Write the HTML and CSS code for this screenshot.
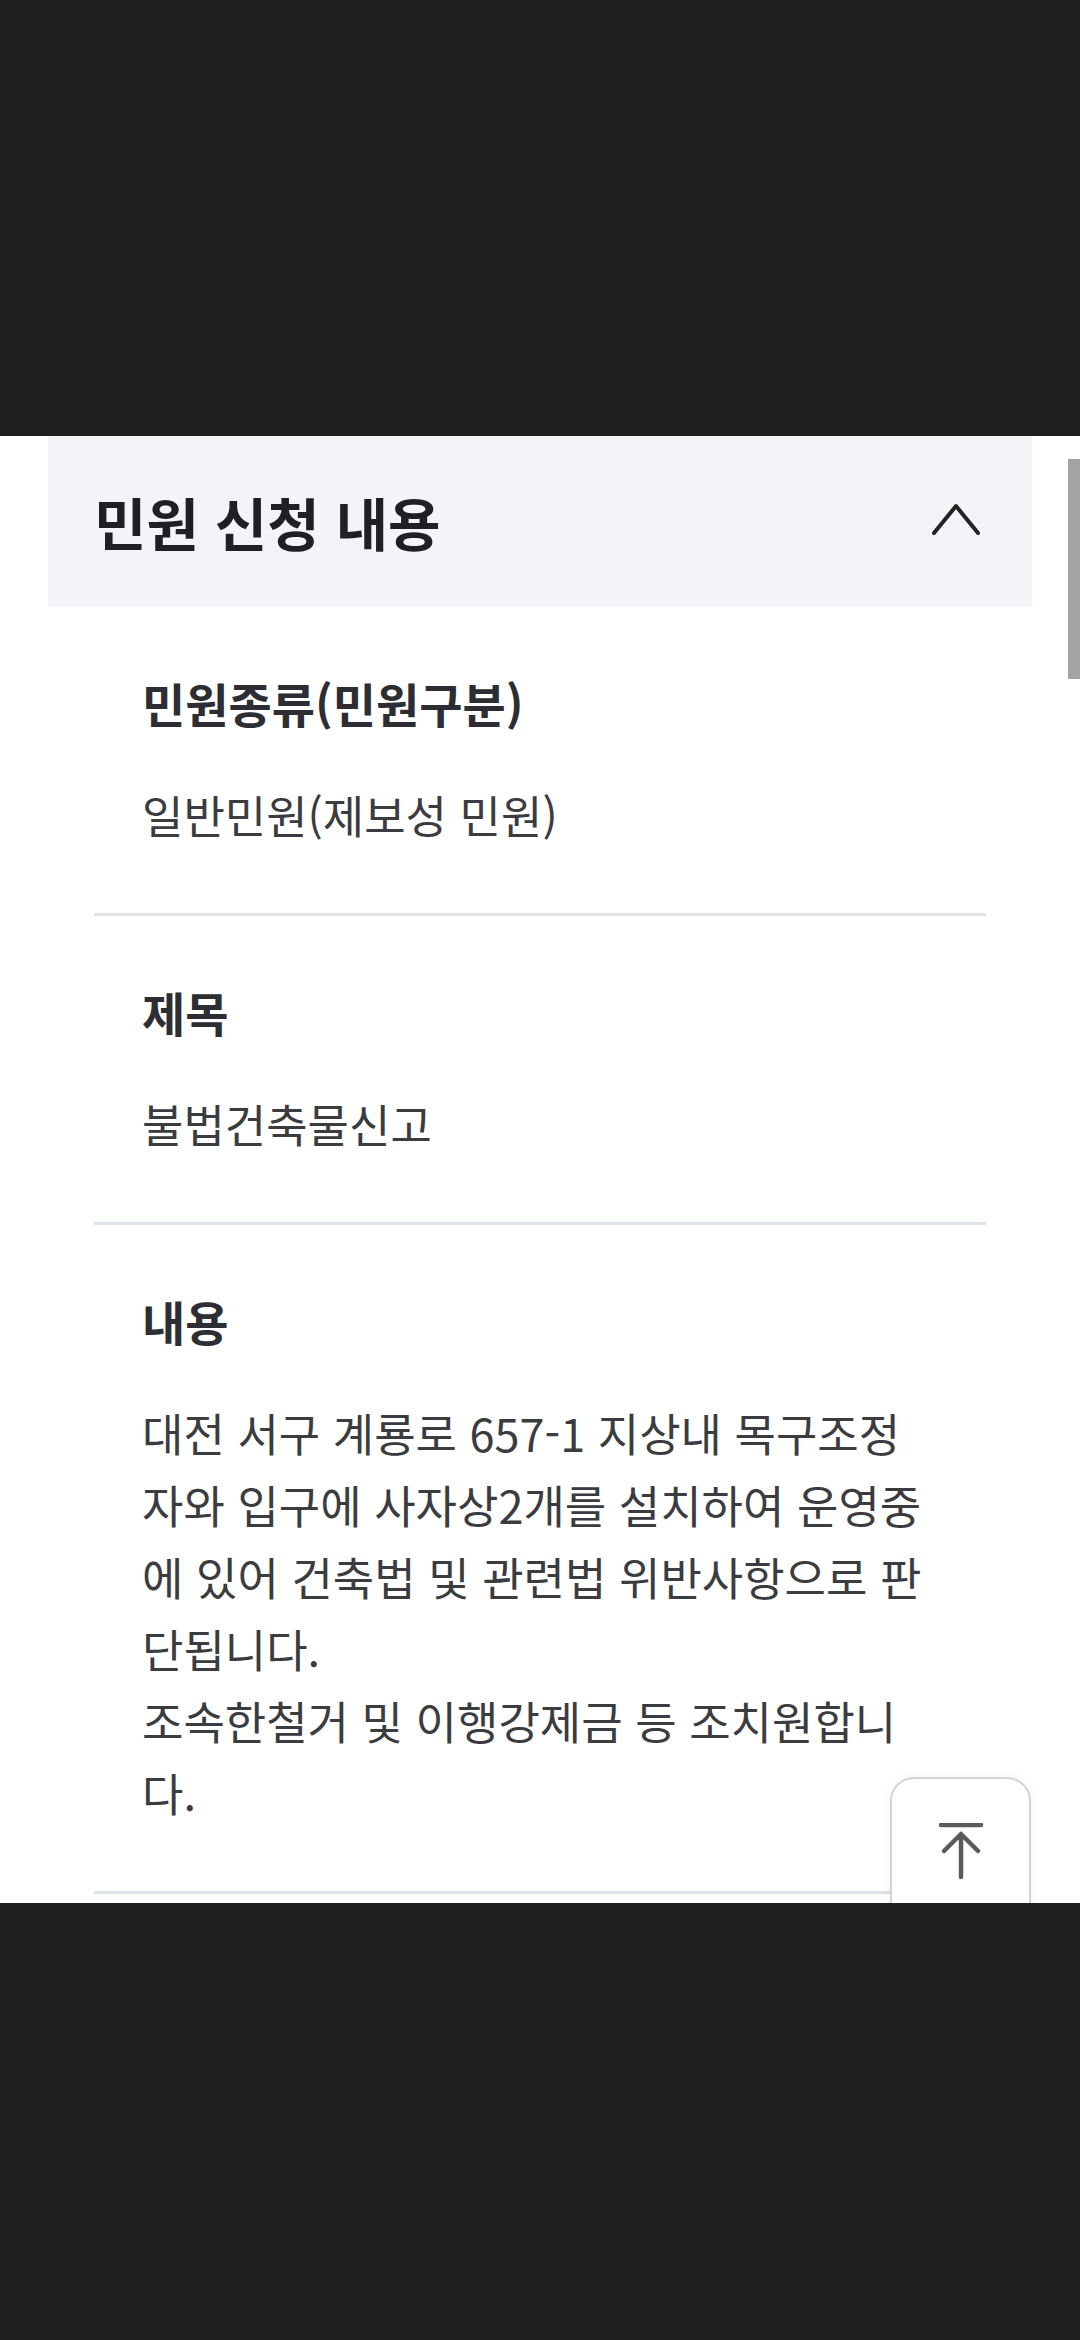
FILE: index.html
```html
<!DOCTYPE html>
<html lang="ko">
<head>
  <meta charset="UTF-8" />
  <meta name="viewport" content="width=device-width, initial-scale=1" />
  <title>민원 신청 내용</title>
  <link rel="stylesheet" href="styles.css">
</head>
<body>

<div class="shade"></div>

<main class="viewport">
  <section class="panel">
    <div class="panel-head">
      <h2>민원 신청 내용</h2>
      <svg class="chevron" width="48" height="32" viewBox="0 0 48 32">
        <path d="M2 30 L24 3 L46 30" fill="none" stroke="#222" stroke-width="4" stroke-linecap="round" stroke-linejoin="round"/>
      </svg>
    </div>

    <div class="field">
      <h3>민원종류(민원구분)</h3>
      <p>일반민원(제보성 민원)</p>
    </div>

    <div class="field">
      <h3>제목</h3>
      <p>불법건축물신고</p>
    </div>

    <div class="field">
      <h3>내용</h3>
      <p>대전 서구 계룡로 657-1 지상내 목구조정자와 입구에 사자상2개를 설치하여 운영중에 있어 건축법 및 관련법 위반사항으로 판단됩니다.<br>조속한철거 및 이행강제금 등 조치원합니다.</p>
    </div>
  </section>

  <!-- back to top -->
  <a class="to-top" href="#">
    <svg width="48" height="60" viewBox="0 0 48 60">
      <path d="M4 2 H44" stroke="#5a5b5f" stroke-width="4.5" stroke-linecap="round"/>
      <path d="M24 12 V54 M7 28 L24 11 L41 28" fill="none" stroke="#5a5b5f" stroke-width="4.5" stroke-linecap="round" stroke-linejoin="round"/>
    </svg>
  </a>

  <div class="scrollbar"></div>
</main>

<div class="shade"></div>

</body>
</html>
```

FILE: styles.css
```css
body {
  margin: 0;
  padding: 0;
  background: #202020;
  font-family: "Noto Sans CJK KR", "Noto Sans", sans-serif;
}
.shade {
  height: 436px;
  background: #202020;
}
.viewport {
  position: relative;
  height: 1467px;
  overflow: hidden;
  background: white;
  padding: 0 48px;
}
.panel-head {
  height: 171px;
  background: #f3f4f7;
  display: flex;
  align-items: center;
  justify-content: space-between;
  padding: 0 52px 0 46px;
}
.panel-head h2 {
  margin: 0;
  font-size: 57px;
  font-weight: 700;
  color: #1f2023;
  line-height: 1;
}
.chevron {
  margin-top: -6px;
}
.field {
  margin: 0 46px;
  padding: 66px 52px 62px 48px;
  border-bottom: 3px solid #dee3e8;
}
.field h3 {
  margin: 0 0 46px;
  font-size: 47px;
  font-weight: 700;
  line-height: 60px;
  color: #2c2e33;
}
.field p {
  margin: 0;
  font-size: 45px;
  line-height: 72px;
  color: #3b3c40;
}
.to-top {
  position: absolute;
  left: 890px;
  top: 1341px;
  width: 141px;
  height: 170px;
  box-sizing: border-box;
  border: 2px solid #d3d4d6;
  border-radius: 24px;
  background: white;
  box-shadow: 0 0 12px rgba(0,0,0,0.05);
  display: flex;
  justify-content: center;
  padding-top: 44px;
}
.scrollbar {
  position: absolute;
  right: 0;
  top: 23px;
  width: 12px;
  height: 220px;
  background: #a3a3a6;
}
```
